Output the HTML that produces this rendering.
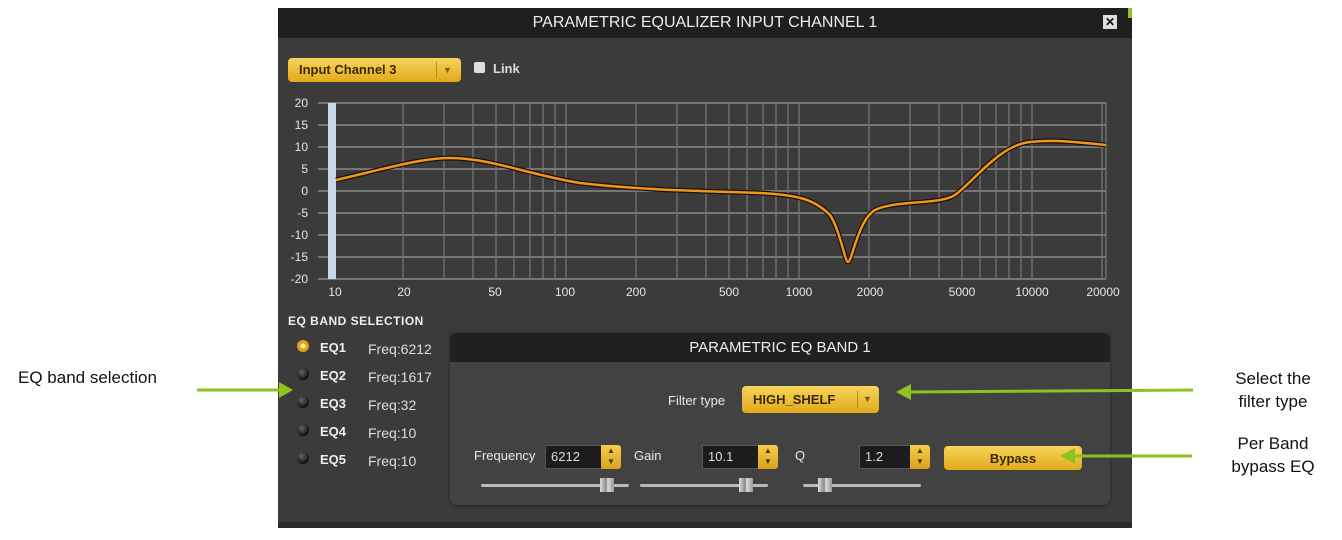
<!DOCTYPE html>
<html><head><meta charset="utf-8"><style>
body{margin:0;width:1342px;height:540px;background:#fff;position:relative;overflow:hidden;font-family:"Liberation Sans",sans-serif}
.a{position:absolute}
.ann{font-family:"Liberation Sans",sans-serif;font-size:17px;color:#111;text-align:center;line-height:23px}
.gold{background:linear-gradient(#f7d45a,#e2a91c);border-radius:4px;color:#3a2a00;font-weight:bold}
.lbl{color:#e8e8e8;font-size:13px}
.eq{color:#eee;font-weight:bold;font-size:13px}
.fr{color:#ddd;font-size:14px}
.dot{width:12px;height:12px;border-radius:50%;background:radial-gradient(circle at 40% 35%,#666,#111 70%)}
.inp{background:#1c1c1c;border:1px solid #555;color:#ddd;font-size:13px;padding-left:5px;line-height:22px;height:22px}
.spin{background:linear-gradient(#f4cd4f,#dba21a);width:20px;height:24px;border-radius:0 3px 3px 0;color:#4a3500;font-size:8px;line-height:11px;text-align:center}
</style></head><body>
<div class="a" style="left:278px;top:8px;width:854px;height:520px;background:#3b3b3b"></div>
<div class="a" style="left:278px;top:8px;width:854px;height:30px;background:#1f1f1f;color:#eee;font-size:16px;text-align:center;line-height:29px">PARAMETRIC EQUALIZER INPUT CHANNEL 1</div>
<div class="a" style="left:1103px;top:15px;width:14px;height:14px;background:#ddd;color:#111;font-size:12px;font-weight:bold;text-align:center;line-height:14px">✕</div>
<div class="a" style="left:278px;top:522px;width:854px;height:6px;background:#2a2a2a"></div>
<div class="a" style="left:1128px;top:8px;width:4px;height:10px;background:#8dc21f"></div>

<div class="a gold" style="left:288px;top:58px;width:173px;height:24px;font-size:13px;line-height:24px"><span style="padding-left:11px">Input Channel 3</span><span style="position:absolute;left:148px;top:4px;height:16px;border-left:1px solid #b88a1a"></span><span style="position:absolute;left:155px;font-size:9px;color:#7a5a10">▼</span></div>
<div class="a" style="left:474px;top:62px;width:11px;height:11px;background:#ddd;border-radius:2px"></div>
<div class="a" style="left:493px;top:61px;color:#ddd;font-size:13px;font-weight:bold">Link</div>

<svg class="a" style="left:278px;top:95px" width="854" height="210" viewBox="278 95 854 210">
<g stroke="#9a9a9a" stroke-width="1.2">
<line x1="318" y1="103" x2="1106" y2="103"/><line x1="318" y1="125" x2="1106" y2="125"/><line x1="318" y1="147" x2="1106" y2="147"/><line x1="318" y1="169" x2="1106" y2="169"/><line x1="318" y1="191" x2="1106" y2="191"/><line x1="318" y1="213" x2="1106" y2="213"/><line x1="318" y1="235" x2="1106" y2="235"/><line x1="318" y1="257" x2="1106" y2="257"/><line x1="318" y1="279" x2="1106" y2="279"/>
</g>
<g stroke="#7a7a7a" stroke-width="1.2">
<path d="M403 103V279M444 103V279M473 103V279M496 103V279M514 103V279M530 103V279M543 103V279M555 103V279M566 103V279M636 103V279M677 103V279M706 103V279M729 103V279M747 103V279M763 103V279M776 103V279M788 103V279M799 103V279M869 103V279M910 103V279M939 103V279M962 103V279M980 103V279M996 103V279M1009 103V279M1021 103V279M1032 103V279M1102 103V279M1106 103V279"/>
</g>
<rect x="328" y="103" width="8" height="176" fill="#c9d8e6"/>
<path d="M336 180 C380 170 420 158 450 158 C490 158 530 175 580 183 C640 190 700 191 760 193 C800 195 815 200 830 215 C840 230 845 262 848 262 C852 262 858 220 875 210 C895 200 940 205 955 195 C975 180 1000 145 1030 142 C1060 139 1080 143 1106 145" fill="none" stroke="#1a1208" stroke-width="5"/>
<path d="M336 180 C380 170 420 158 450 158 C490 158 530 175 580 183 C640 190 700 191 760 193 C800 195 815 200 830 215 C840 230 845 262 848 262 C852 262 858 220 875 210 C895 200 940 205 955 195 C975 180 1000 145 1030 142 C1060 139 1080 143 1106 145" fill="none" stroke="#f0961a" stroke-width="2.5"/>
<g fill="#e8e8e8" font-size="12" font-family="Liberation Sans,sans-serif" text-anchor="end">
<text x="308" y="107">20</text><text x="308" y="129">15</text><text x="308" y="151">10</text><text x="308" y="173">5</text><text x="308" y="195">0</text><text x="308" y="217">-5</text><text x="308" y="239">-10</text><text x="308" y="261">-15</text><text x="308" y="283">-20</text>
</g>
<g fill="#e8e8e8" font-size="12" font-family="Liberation Sans,sans-serif" text-anchor="middle">
<text x="335" y="296">10</text><text x="404" y="296">20</text><text x="495" y="296">50</text><text x="565" y="296">100</text><text x="636" y="296">200</text><text x="729" y="296">500</text><text x="799" y="296">1000</text><text x="870" y="296">2000</text><text x="962" y="296">5000</text><text x="1032" y="296">10000</text><text x="1103" y="296">20000</text>
</g>
</svg>

<div class="a" style="left:288px;top:314px;color:#eee;font-size:12px;font-weight:bold;letter-spacing:0.5px">EQ BAND SELECTION</div>
<div class="a" style="left:297px;top:340px;width:12px;height:12px;border-radius:50%;background:radial-gradient(circle,#fff3b0 0 2px,#e0a020 3px)"></div>
<div class="a dot" style="left:297px;top:368px"></div>
<div class="a dot" style="left:297px;top:396px"></div>
<div class="a dot" style="left:297px;top:424px"></div>
<div class="a dot" style="left:297px;top:452px"></div>
<div class="a eq" style="left:320px;top:340px">EQ1</div><div class="a fr" style="left:368px;top:341px">Freq:6212</div>
<div class="a eq" style="left:320px;top:368px">EQ2</div><div class="a fr" style="left:368px;top:369px">Freq:1617</div>
<div class="a eq" style="left:320px;top:396px">EQ3</div><div class="a fr" style="left:368px;top:397px">Freq:32</div>
<div class="a eq" style="left:320px;top:424px">EQ4</div><div class="a fr" style="left:368px;top:425px">Freq:10</div>
<div class="a eq" style="left:320px;top:452px">EQ5</div><div class="a fr" style="left:368px;top:453px">Freq:10</div>

<div class="a" style="left:450px;top:333px;width:660px;height:172px;background:#424242;border-radius:6px;box-shadow:0 1px 3px #222"></div>
<div class="a" style="left:450px;top:333px;width:660px;height:29px;background:#202020;border-radius:6px 6px 0 0;color:#eee;font-size:15px;text-align:center;line-height:29px">PARAMETRIC EQ BAND 1</div>
<div class="a lbl" style="left:668px;top:393px">Filter type</div>
<div class="a gold" style="left:742px;top:386px;width:137px;height:27px;font-size:13px;line-height:27px"><span style="padding-left:11px">HIGH_SHELF</span><span style="position:absolute;left:115px;top:5px;height:17px;border-left:1px solid #b88a1a"></span><span style="position:absolute;left:121px;font-size:9px;color:#7a5a10">▼</span></div>

<div class="a lbl" style="left:474px;top:448px">Frequency</div>
<div class="a inp" style="left:545px;top:445px;width:50px">6212</div><div class="a spin" style="left:601px;top:445px">▲<br>▼</div>
<div class="a lbl" style="left:634px;top:448px">Gain</div>
<div class="a inp" style="left:702px;top:445px;width:50px">10.1</div><div class="a spin" style="left:758px;top:445px">▲<br>▼</div>
<div class="a lbl" style="left:795px;top:448px">Q</div>
<div class="a inp" style="left:859px;top:445px;width:45px">1.2</div><div class="a spin" style="left:910px;top:445px">▲<br>▼</div>
<div class="a gold" style="left:944px;top:446px;width:138px;height:24px;font-size:13px;line-height:26px;text-align:center">Bypass</div>

<div class="a" style="left:481px;top:484px;width:148px;height:3px;background:#bbb;border-radius:2px"></div>
<div class="a" style="left:600px;top:478px;width:14px;height:14px;background:linear-gradient(90deg,#ddd,#888 45%,#ddd 55%,#999)"></div>
<div class="a" style="left:640px;top:484px;width:128px;height:3px;background:#bbb;border-radius:2px"></div>
<div class="a" style="left:739px;top:478px;width:14px;height:14px;background:linear-gradient(90deg,#ddd,#888 45%,#ddd 55%,#999)"></div>
<div class="a" style="left:803px;top:484px;width:118px;height:3px;background:#bbb;border-radius:2px"></div>
<div class="a" style="left:818px;top:478px;width:14px;height:14px;background:linear-gradient(90deg,#ddd,#888 45%,#ddd 55%,#999)"></div>

<div class="a ann" style="left:18px;top:366px">EQ band selection</div>
<div class="a ann" style="left:1210px;top:367px;width:126px">Select the<br>filter type</div>
<div class="a ann" style="left:1210px;top:432px;width:126px">Per Band<br>bypass EQ</div>
<svg class="a" style="left:0;top:0" width="1342" height="540">
<g stroke="#8dc21f" stroke-width="3" fill="#8dc21f">
<line x1="197" y1="390" x2="280" y2="390"/><polygon points="293,390 279,382 279,398" stroke="none"/>
<line x1="910" y1="392" x2="1193" y2="390"/><polygon points="896,392 911,384 911,400" stroke="none"/>
<line x1="1075" y1="456" x2="1192" y2="456"/><polygon points="1060,456 1075,448 1075,464" stroke="none"/>
</g>
</svg>
</body></html>
